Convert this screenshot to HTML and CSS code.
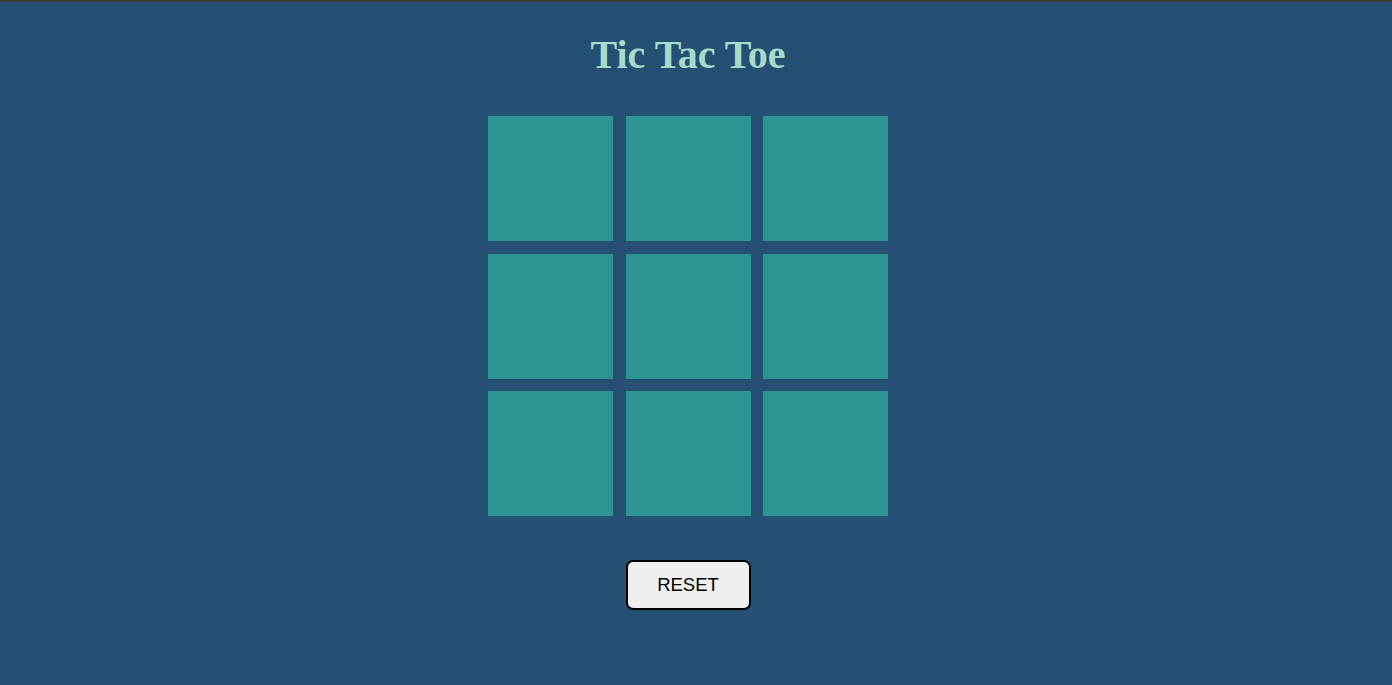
FILE: index.html
```html
<!DOCTYPE html>
<html lang="en">
<head>
<meta charset="utf-8">
<title>Tic Tac Toe</title>
<link rel="stylesheet" href="styles.css">
</head>
<body>
<div class="topbar"></div>
<main class="app">
  <h1 class="title">Tic Tac Toe</h1>
  <div class="board">
    <div class="cell"></div>
    <div class="cell"></div>
    <div class="cell"></div>
    <div class="cell"></div>
    <div class="cell"></div>
    <div class="cell"></div>
    <div class="cell"></div>
    <div class="cell"></div>
    <div class="cell"></div>
  </div>
  <button class="reset" type="button">RESET</button>
</main>
</body>
</html>
```
FILE: styles.css
```css
html, body {
  margin: 0;
  padding: 0;
  height: 100%;
}
body {
  background: #255074;
  font-family: "Liberation Serif", "Times New Roman", serif;
}
.topbar {
  height: 2px;
  background: #3b3b3b;
}
.app {
  width: 1376px;
  display: flex;
  flex-direction: column;
  align-items: center;
}
.title {
  margin: 30px 0 0;
  font-size: 40px;
  line-height: 46px;
  font-weight: bold;
  color: #a6dbcc;
}
.board {
  margin-top: 38px;
  display: grid;
  grid-template-columns: repeat(3, 125px);
  grid-template-rows: repeat(3, 125px);
  gap: 12.5px;
}
.cell {
  background: #2d9494;
}
.reset {
  margin-top: 44px;
  width: 125px;
  height: 50px;
  background: #efefef;
  border: 2px solid #000;
  border-radius: 7px;
  font-family: "Liberation Sans", Arial, sans-serif;
  font-size: 18.5px;
  color: #000;
  padding: 0;
}
```
